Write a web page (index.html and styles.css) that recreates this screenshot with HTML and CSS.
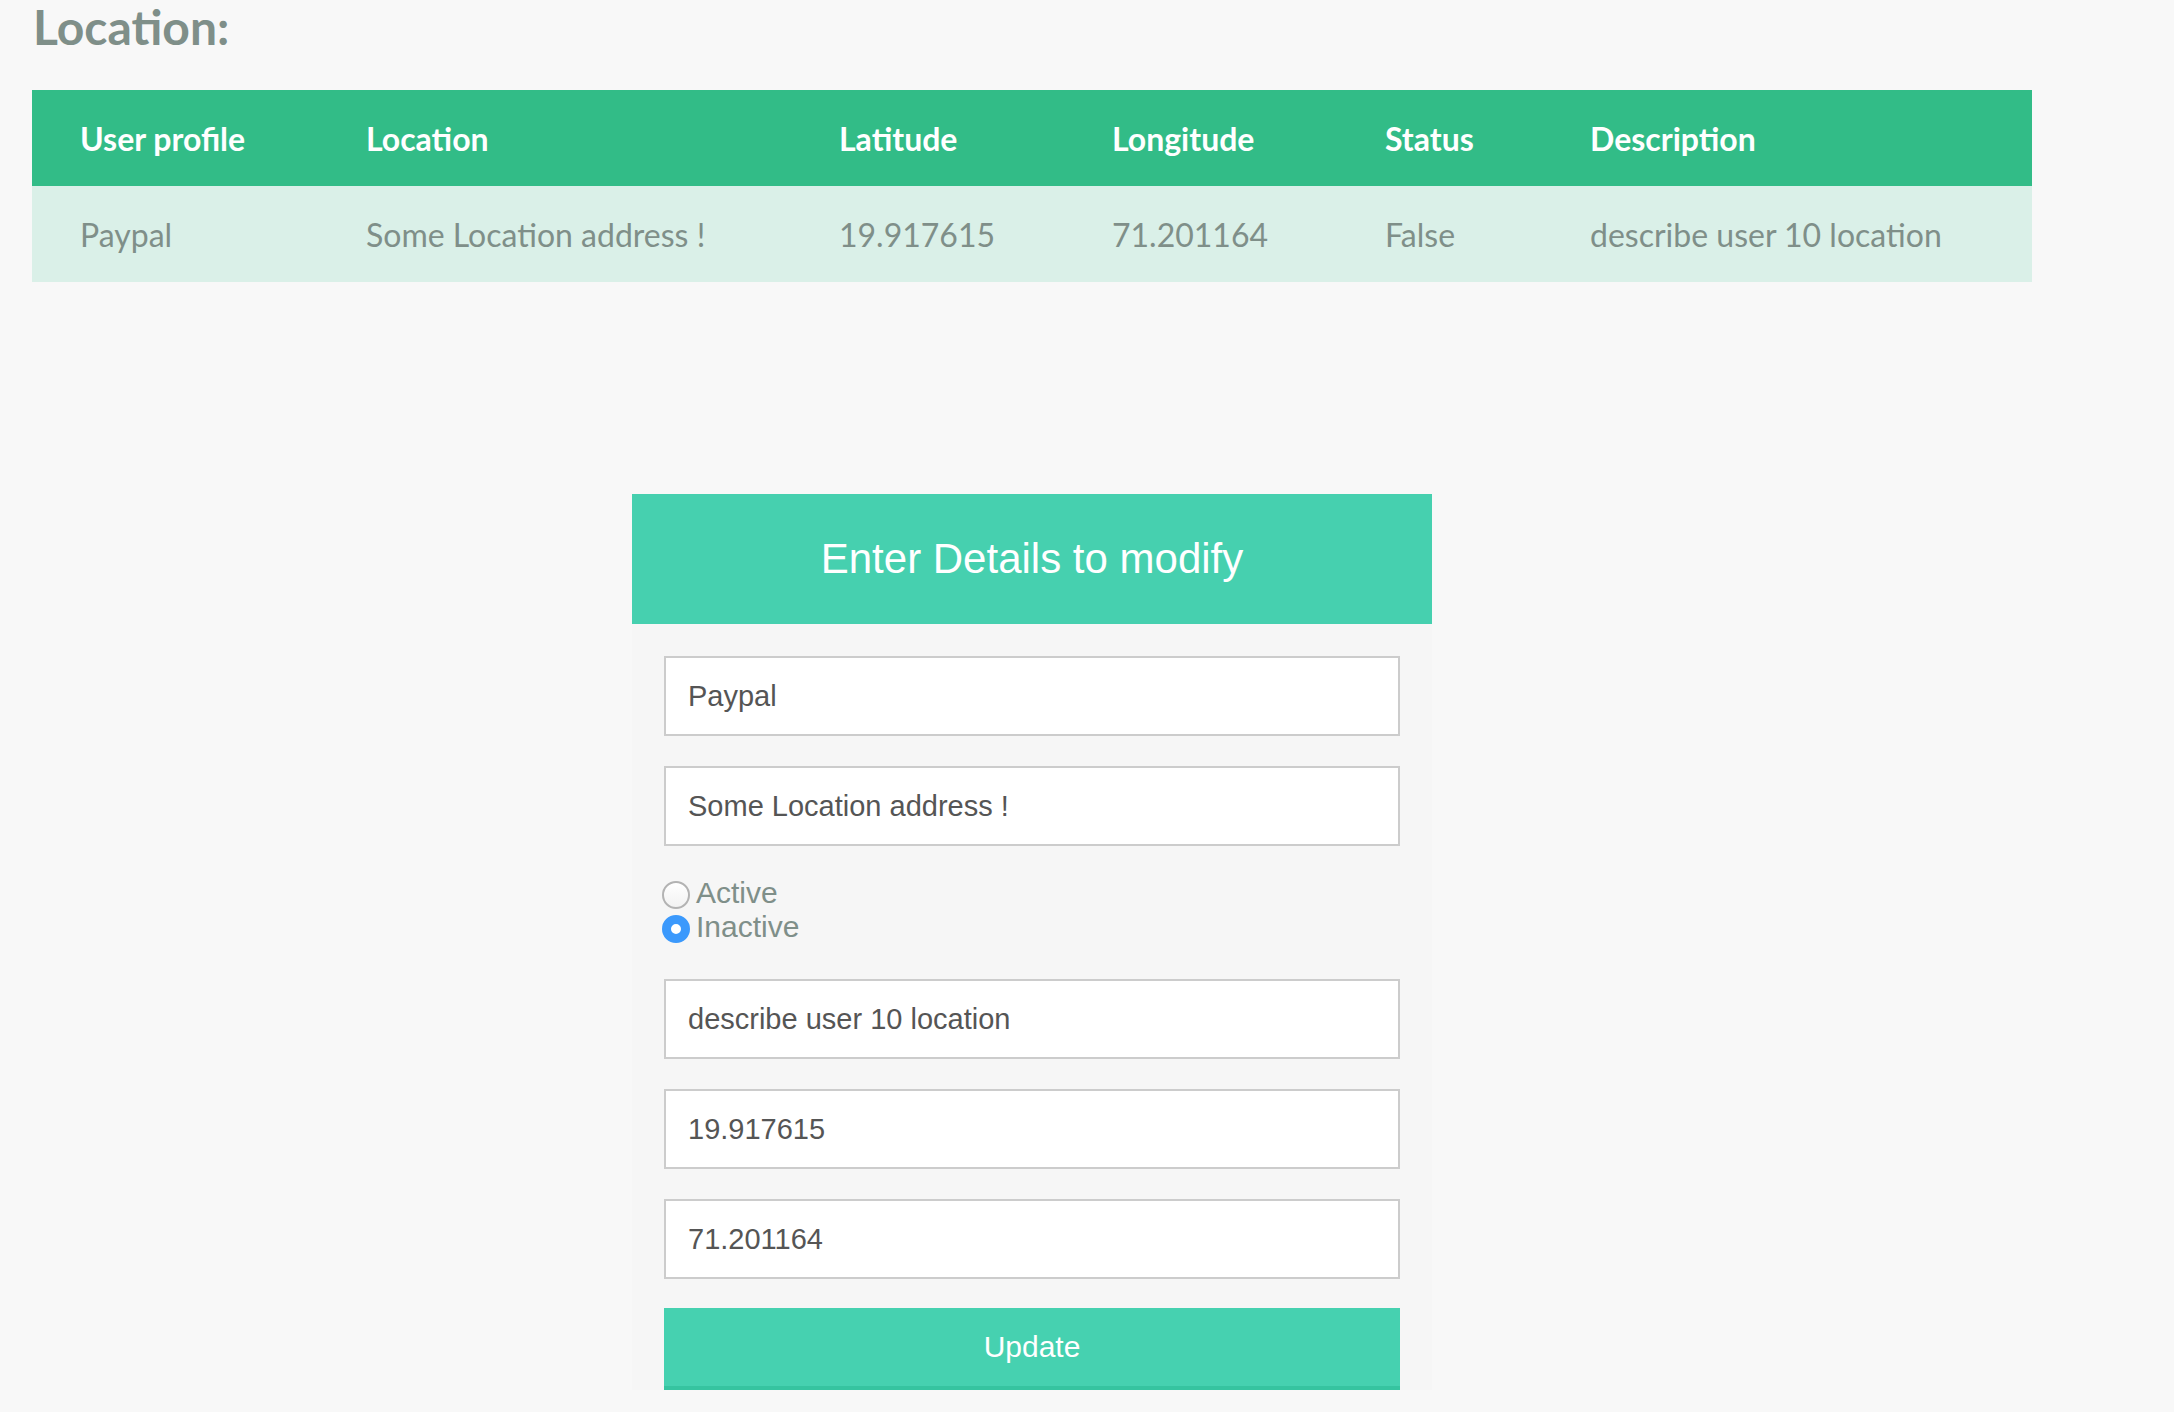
FILE: index.html
```html
<!DOCTYPE html>
<html lang="en">
<head>
<meta charset="utf-8">
<title>Location</title>
<link rel="stylesheet" href="styles.css">
</head>
<body>
<h2 class="page-title">Location:</h2>
<table class="loc-table">
  <colgroup>
    <col class="c1"><col class="c2"><col class="c3"><col class="c4"><col class="c5"><col class="c6">
  </colgroup>
  <thead>
    <tr>
      <th>User profile</th>
      <th>Location</th>
      <th>Latitude</th>
      <th>Longitude</th>
      <th>Status</th>
      <th>Description</th>
    </tr>
  </thead>
  <tbody>
    <tr>
      <td>Paypal</td>
      <td>Some Location address !</td>
      <td>19.917615</td>
      <td>71.201164</td>
      <td>False</td>
      <td>describe user 10 location</td>
    </tr>
  </tbody>
</table>

<form class="edit-form">
  <div class="form-head">Enter Details to modify</div>
  <div class="form-body">
    <input class="field" type="text" value="Paypal">
    <input class="field" type="text" value="Some Location address !">
    <div class="radios">
      <label class="radio-line"><input type="radio" name="status" class="radio"><span>Active</span></label>
      <label class="radio-line"><input type="radio" name="status" class="radio" checked><span>Inactive</span></label>
    </div>
    <input class="field" type="text" value="describe user 10 location">
    <input class="field" type="text" value="19.917615">
    <input class="field" type="text" value="71.201164">
    <button type="button" class="update-btn">Update</button>
  </div>
</form>
</body>
</html>
```

FILE: styles.css
```css
html, body {
  margin: 0;
  padding: 0;
  background: #f8f8f8;
}

body {
  font-family: "Lato", "Liberation Sans", sans-serif;
  color: #7f8f89;
  padding-bottom: 22px;
}

.page-title {
  margin: 0 0 38px 33px;
  padding-top: 2px;
  font-family: "Lato", sans-serif;
  font-weight: 700;
  font-size: 48px;
  line-height: 50px;
  color: #7f8f89;
}

.loc-table {
  margin-left: 32px;
  width: 2000px;
  border-collapse: collapse;
  table-layout: fixed;
}

.c1 { width: 286px; }
.c2 { width: 473px; }
.c3 { width: 273px; }
.c4 { width: 273px; }
.c5 { width: 205px; }
.c6 { width: 490px; }

.loc-table th,
.loc-table td {
  height: 96px;
  padding: 0 0 0 48px;
  text-align: left;
  vertical-align: middle;
  box-sizing: border-box;
  white-space: nowrap;
}

.loc-table thead tr {
  background: #32bc87;
}

.loc-table th {
  color: #ffffff;
  font-weight: 700;
  font-size: 32px;
}

.loc-table tbody tr {
  background: #daf0e8;
}

.loc-table td {
  color: #7f8f89;
  font-weight: 400;
  font-size: 32px;
}

.edit-form {
  margin: 212px 0 0 632px;
  width: 800px;
  background: #f6f6f6;
}

.form-head {
  height: 130px;
  background: #46d0af;
  color: #ffffff;
  font-family: "Liberation Sans", Arial, sans-serif;
  font-size: 42px;
  display: flex;
  align-items: center;
  justify-content: center;
}

.form-body {
  padding: 32px 32px 0 32px;
  display: flex;
  flex-direction: column;
}

.field {
  box-sizing: border-box;
  width: 736px;
  height: 80px;
  margin: 0 0 30px 0;
  padding: 0 0 0 22px;
  border: 2px solid #cccccc;
  border-radius: 0;
  background: #ffffff;
  color: #555555;
  font-family: "Liberation Sans", Arial, sans-serif;
  font-size: 29px;
  outline: none;
}

.radios {
  margin: 0 0 35px -2px;
  display: flex;
  flex-direction: column;
}

.radio-line {
  display: flex;
  align-items: center;
  height: 34px;
  font-family: "Liberation Sans", Arial, sans-serif;
  font-size: 30px;
  color: #7f8f89;
}

.radio {
  appearance: none;
  -webkit-appearance: none;
  box-sizing: border-box;
  width: 28px;
  height: 28px;
  margin: 3px 6px 0 0;
  border-radius: 50%;
  border: 2px solid #b3b3b3;
  background: linear-gradient(#ffffff, #f2f2f2);
  flex: none;
}

.radio:checked {
  border: 9px solid #3b99fc;
  background: #ffffff;
}

.update-btn {
  box-sizing: border-box;
  width: 736px;
  height: 82px;
  margin: -1px 0 0 0;
  border: none;
  border-bottom: 4px solid #36c4a0;
  border-radius: 0;
  background: #46d1b0;
  color: #ffffff;
  font-family: "Liberation Sans", Arial, sans-serif;
  font-size: 30px;
  padding: 0;
  cursor: pointer;
}
```
